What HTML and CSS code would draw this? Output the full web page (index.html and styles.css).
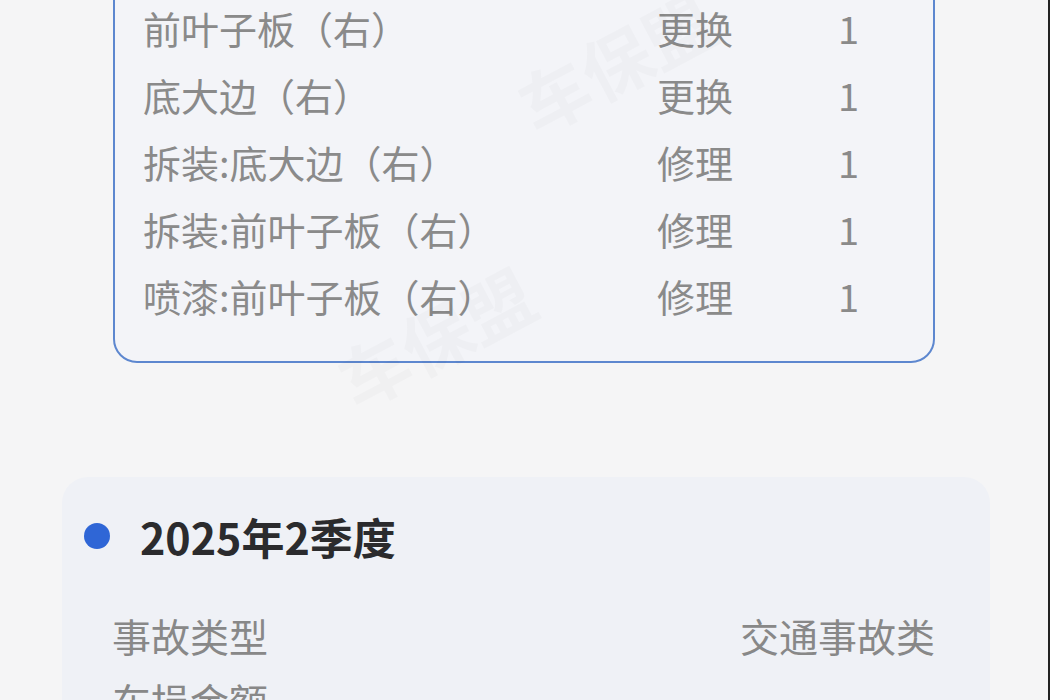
FILE: index.html
```html
<!DOCTYPE html>
<html>
<head>
    <link rel="stylesheet" href="styles.css">
</head>
<body>
    <main class="page">
        <section class="card card-plain">
            <div class="parts-box">
                <div class="part-row"><span>前叶子板（右）</span><span>更换</span><span>1</span></div>
                <div class="part-row"><span>底大边（右）</span><span>更换</span><span>1</span></div>
                <div class="part-row"><span>拆装:底大边（右）</span><span>修理</span><span>1</span></div>
                <div class="part-row"><span>拆装:前叶子板（右）</span><span>修理</span><span>1</span></div>
                <div class="part-row"><span>喷漆:前叶子板（右）</span><span>修理</span><span>1</span></div>
            </div>
        </section>

        <section class="card card-quarter">
            <h2 class="quarter-title"><span class="dot"></span>2025年2季度</h2>
            <div class="info-row"><span>事故类型</span><span>交通事故类</span></div>
            <div class="info-row"><span>车损金额</span><span></span></div>
        </section>
    </main>

    <div class="watermark wm-one">车保盟</div>
    <div class="watermark wm-two">车保盟</div>
    <div class="frame-edge"></div>
</body>
</html>
```

FILE: styles.css
```css
* {
    box-sizing: border-box;
}

html, body {
    margin: 0;
    padding: 0;
    height: 100%;
    overflow: hidden;
    background-color: #f5f5f6;
    font-family: "Noto Sans CJK SC", "Noto Sans", sans-serif;
    color: #888;
}

.page {
    display: flex;
    flex-direction: column;
    gap: 114px;
    margin-top: -92px;
    padding: 0 60px 0 62px;
}

.card {
    border-radius: 26px;
}

.card-plain {
    padding: 0 55px 0 51px;
}

.parts-box {
    border: 2px solid #5d87cf;
    border-radius: 24px;
    background-color: #f3f4f8;
    padding: 84px 28px 32px 28px;
}

.part-row {
    display: grid;
    grid-template-columns: 514px 181px auto;
    height: 67px;
    align-items: center;
    font-size: 38px;
    color: #8a8a8a;
    white-space: nowrap;
}

.card-quarter {
    background-color: #eff1f6;
    padding: 31px 55px 0 22px;
    min-height: 300px;
}

.quarter-title {
    display: flex;
    align-items: center;
    margin: 0 0 38px 0;
    height: 56px;
    font-size: 43px;
    font-weight: 700;
    color: #2b2b2d;
}

.dot {
    width: 26px;
    height: 26px;
    border-radius: 50%;
    background-color: #2f66d6;
    margin-right: 30px;
}

.info-row {
    display: flex;
    justify-content: space-between;
    align-items: center;
    height: 65px;
    margin-left: 28px;
    font-size: 39px;
    color: #888;
}

.watermark {
    position: absolute;
    font-size: 70px;
    font-weight: 700;
    color: rgba(0, 0, 0, 0.018);
    transform: rotate(-28deg);
    pointer-events: none;
}

.wm-one {
    left: 510px;
    top: 10px;
}

.wm-two {
    left: 330px;
    top: 285px;
}

.frame-edge {
    position: absolute;
    right: 0;
    top: 0;
    width: 2px;
    height: 100%;
    background-color: #222;
}
```
